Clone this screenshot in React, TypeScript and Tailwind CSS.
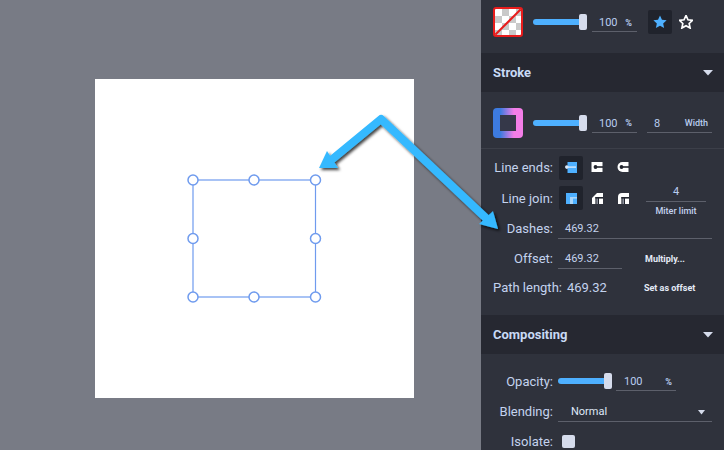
import React from "react";

function Slider({ w }: { w: number }) {
  return (
    <div className="relative h-[16px] flex items-center" style={{ width: w }}>
      <div className="h-[6px] w-full rounded-full bg-[#4eb0ff]" />
      <div className="absolute right-0 top-0 h-[16px] w-[8px] rounded-[2px] bg-[#d6dcec]" />
    </div>
  );
}

function Field({ w, value, unit, className = "" }: { w: number; value: string; unit?: string; className?: string }) {
  return (
    <div className={`flex h-[20px] items-center border-b border-[#5d606b] pt-[4px] ${className}`} style={{ width: w }}>
      <span className="text-[11px] text-[#b9cdf0]">{value}</span>
      {unit && <span className="ml-auto text-[9px] font-bold text-[#b9cdf0]">{unit}</span>}
    </div>
  );
}

function Label({ children, w = 72 }: { children: React.ReactNode; w?: number }) {
  return <div className="shrink-0 text-right text-[13px] leading-none text-[#c4d3ee]" style={{ width: w }}>{children}</div>;
}

function Header({ title }: { title: string }) {
  return (
    <div className="flex h-[39px] shrink-0 items-center justify-between bg-[#262831] pl-[12px] pr-[11px]">
      <span className="text-[13px] font-bold text-[#c9daf5]">{title}</span>
      <svg width="10" height="6" viewBox="0 0 10 6"><path d="M0 0h10L5 5.5z" fill="#d6dcec" /></svg>
    </div>
  );
}

function CapIcon({ kind }: { kind: number }) {
  if (kind === 0)
    return (
      <svg width="12" height="11" viewBox="0 0 12 11">
        <rect x="2.5" y="0" width="9.5" height="11" fill="#4eb0ff" />
        <rect x="1" y="4.4" width="10" height="1.4" fill="#d8e8fa" />
        <circle cx="1.8" cy="5.1" r="1.8" fill="#d8e8fa" />
      </svg>
    );
  if (kind === 1)
    return (
      <svg width="12" height="11" viewBox="0 0 12 11">
        <rect x="0.5" y="0" width="11" height="10" fill="#fff" />
        <rect x="4" y="4.2" width="8" height="1.6" fill="#23262f" />
        <circle cx="4.5" cy="5" r="1.9" fill="#23262f" />
      </svg>
    );
  return (
    <svg width="12" height="11" viewBox="0 0 12 11">
      <path d="M11.5 0H5.5a5 5 0 0 0 0 10h6z" fill="#fff" />
      <rect x="4" y="4.2" width="8" height="1.6" fill="#23262f" />
      <circle cx="4.5" cy="5" r="1.9" fill="#23262f" />
    </svg>
  );
}

function JoinIcon({ kind }: { kind: number }) {
  if (kind === 0)
    return (
      <svg width="11" height="11" viewBox="0 0 11 11">
        <rect width="11" height="11" fill="#4eb0ff" />
        <rect x="4" y="4" width="7" height="1.6" fill="#a9d6fb" />
        <rect x="4" y="4" width="3" height="7" fill="#a9d6fb" />
      </svg>
    );
  return (
    <svg width="11" height="11" viewBox="0 0 11 11">
      <path d={kind === 1 ? "M0 11V5L5 0h6v11z" : "M0 11V4a4 4 0 0 1 4-4h7v11z"} fill="#fff" />
      <rect x="3.4" y="4" width="7.6" height="1.6" fill="#23262f" />
      <rect x="3.4" y="4" width="3.6" height="7" fill="#23262f" />
      <rect x="4.4" y="5.6" width="1.6" height="5.4" fill="#8b8f9b" />
    </svg>
  );
}

function IconCell({ active, children }: { active?: boolean; children: React.ReactNode }) {
  return (
    <div className={`flex h-[24px] w-[24px] items-center justify-center rounded-[2px] ${active ? "bg-[#20232c]" : ""}`}>
      {children}
    </div>
  );
}

const star = "M7.5 0.5l2.1 4.6 5 .6-3.7 3.4 1 4.9-4.4-2.5-4.4 2.5 1-4.9L.4 5.7l5-.6z";

export default function App() {
  return (
    <div className="relative flex h-[450px] w-[724px] overflow-hidden font-['Roboto',sans-serif]">
      <div className="flex h-full w-[481px] items-start bg-[#787b85] pl-[95px] pt-[79px]">
        <div className="h-[319px] w-[319px] bg-white" />
      </div>

      <div className="flex h-full w-[243px] flex-col overflow-hidden bg-[#2f323c]">
        <div className="flex h-[53px] shrink-0 items-center pb-[9px] pl-[12px]">
          <div className="h-[30px] w-[30px] overflow-hidden rounded-[3px] border-2 border-[#e81c1c] bg-white bg-[repeating-conic-gradient(#c9c9c9_0_25%,#ffffff_0_50%)] bg-[length:14px_14px]">
            <svg width="26" height="26" viewBox="0 0 26 26"><path d="M0 26L26 0" stroke="#e81c1c" strokeWidth="2" /></svg>
          </div>
          <div className="ml-[10px]"><Slider w={54} /></div>
          <Field w={45} value="100" unit="%" className="ml-[5px] pl-[7px] pr-[5px]" />
          <div className="ml-[11px] flex h-[24px] w-[24px] items-center justify-center rounded-[2px] bg-[#20232c]">
            <svg width="14" height="14" viewBox="0 0 15 15"><path d={star} fill="#4eb0ff" /></svg>
          </div>
          <svg className="ml-[7px]" width="14" height="14" viewBox="0 0 15 15"><path d={star} fill="none" stroke="#fff" strokeWidth="1.8" /></svg>
        </div>

        <Header title="Stroke" />

        <div className="flex h-[57px] shrink-0 items-center border-b border-[#3c3f49] pt-[5px] pl-[12px]">
          <div className="flex h-[30px] w-[30px] items-center justify-center rounded-[4px] bg-[linear-gradient(90deg,#3d7be0_25%,#f47ee8_70%)]">
            <div className="h-[16px] w-[16px] bg-[#353849]" />
          </div>
          <div className="ml-[10px]"><Slider w={54} /></div>
          <Field w={45} value="100" unit="%" className="ml-[5px] pl-[7px] pr-[5px]" />
          <div className="ml-[10px] flex h-[20px] w-[65px] items-center border-b border-[#5d606b] pl-[7px] pr-[4px] pt-[4px]">
            <span className="text-[11px] text-[#b9cdf0]">8</span>
            <span className="ml-auto text-[9px] font-medium text-[#b9cdf0]">Width</span>
          </div>
        </div>

        <div className="flex h-[37px] shrink-0 items-center gap-[3px]">
          <Label>Line ends:</Label>
          <div className="ml-[3px] flex gap-[2px]">
            <IconCell active><CapIcon kind={0} /></IconCell>
            <IconCell><CapIcon kind={1} /></IconCell>
            <IconCell><CapIcon kind={2} /></IconCell>
          </div>
        </div>

        <div className="flex h-[24px] shrink-0 items-center gap-[3px]">
          <Label>Line join:</Label>
          <div className="ml-[3px] flex gap-[2px]">
            <IconCell active><JoinIcon kind={0} /></IconCell>
            <IconCell><JoinIcon kind={1} /></IconCell>
            <IconCell><JoinIcon kind={2} /></IconCell>
          </div>
          <div className="ml-[8px] mt-[6px] flex w-[60px] flex-col items-center">
            <div className="flex h-[19px] w-full items-center justify-center border-b border-[#5d606b] text-[11px] text-[#b9cdf0]">4</div>
            <div className="mt-[3px] text-[9px] font-medium text-[#c4d3ee]">Miter limit</div>
          </div>
        </div>

        <div className="mt-[5px] flex h-[24px] shrink-0 items-center gap-[5px] pt-[2px]">
          <Label>Dashes:</Label>
          <div className="flex h-[22px] w-[154px] items-center border-b border-[#5d606b] pl-[7px] pt-[4px] text-[11px] text-[#c4d3ee]">469.32</div>
        </div>

        <div className="mt-[6px] flex h-[24px] shrink-0 items-center gap-[5px] pt-[2px]">
          <Label>Offset:</Label>
          <div className="flex h-[22px] w-[64px] items-center border-b border-[#5d606b] pl-[7px] pt-[4px] text-[11px] text-[#c4d3ee]">469.32</div>
          <span className="ml-[18px] mt-[3px] text-[9px] font-bold text-[#e4ebf7]">Multiply...</span>
        </div>

        <div className="mt-[7px] flex h-[24px] shrink-0 items-center pl-[12px]">
          <span className="text-[13px] text-[#c4d3ee]">Path length:</span>
          <span className="ml-[5px] text-[13px] text-[#c4d3ee]">469.32</span>
          <span className="ml-[37px] mt-[2px] text-[9px] font-bold text-[#e4ebf7]">Set as offset</span>
        </div>

        <div className="mt-[15px] shrink-0"><Header title="Compositing" /></div>

        <div className="mt-[15px] flex h-[24px] shrink-0 items-center gap-[5px]">
          <Label>Opacity:</Label>
          <Slider w={54} />
          <Field w={60} value="100" unit="%" className="ml-[-1px] pl-[8px] pr-[4px]" />
        </div>

        <div className="mt-[7px] flex h-[22px] shrink-0 items-center gap-[5px]">
          <Label>Blending:</Label>
          <div className="flex h-[22px] w-[154px] items-center justify-between border-b border-[#5d606b] pl-[13px] pr-[7px] pt-[3px]">
            <span className="text-[11px] text-[#dfe8f8]">Normal</span>
            <svg width="7" height="5" viewBox="0 0 7 5"><path d="M0 0h7L3.5 4.5z" fill="#d6dcec" /></svg>
          </div>
        </div>

        <div className="mt-[7px] flex h-[24px] shrink-0 items-center gap-[9px]">
          <Label>Isolate:</Label>
          <div className="h-[13px] w-[13px] rounded-[2px] bg-[#d6dcec]" />
        </div>
      </div>

      <svg className="pointer-events-none absolute left-0 top-0" width="724" height="450" viewBox="0 0 724 450">
        <defs>
          <filter id="sh" x="-20%" y="-20%" width="140%" height="140%">
            <feDropShadow dx="2" dy="2" stdDeviation="1.6" floodColor="#000" floodOpacity="0.75" />
          </filter>
        </defs>
        <g fill="none" stroke="#6f9bee" strokeWidth="1.2">
          <rect x="193" y="180" width="122.5" height="117" />
          {[[193, 180], [254, 180], [315.5, 180], [193, 238.5], [315.5, 238.5], [193, 297], [254, 297], [315.5, 297]].map(([x, y], i) => (
            <circle key={i} cx={x} cy={y} r="5" fill="#fff" strokeWidth="1.5" />
          ))}
        </g>
        <g filter="url(#sh)">
          <path d="M330 161L381 119L488 220" fill="none" stroke="#35b9ff" strokeWidth="8" strokeLinejoin="round" />
          <path d="M319 168L327 151L338 168z" fill="#35b9ff" />
          <path d="M498 229L479 224L493 211z" fill="#35b9ff" />
        </g>
      </svg>
    </div>
  );
}
